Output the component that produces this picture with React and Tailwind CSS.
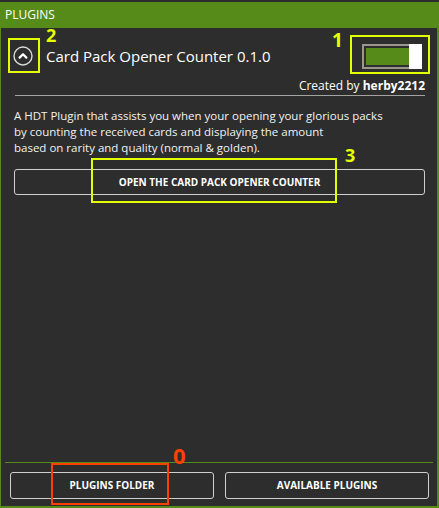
export default function App() {
  const font = { fontFamily: '"Open Sans", "Noto Sans", sans-serif' };
  return (
    <div className="relative w-[439px] h-[508px] overflow-hidden bg-[#2d2d2d] text-white flex flex-col" style={font}>
      <div className="h-[2px] shrink-0" />
      <div className="h-[26px] shrink-0 bg-[#578b19] flex items-center pl-[5px] text-[12px]">PLUGINS</div>

      <div className="flex-1 flex flex-col border-l border-r-2 border-b-2 border-[#578b19]">
        {/* title row */}
        <div className="mt-[10px] h-[36px] flex items-center">
          <div className="ml-[12px] w-[20px] h-[20px]">
            <svg viewBox="0 0 20 20" width="20" height="20">
              <circle cx="10" cy="10" r="9" fill="none" stroke="#d8d8d8" strokeWidth="1.4" />
              <path d="M6.6 11.6 L10 8.2 L13.4 11.6" fill="none" stroke="#ffffff" strokeWidth="2.2" strokeLinecap="round" strokeLinejoin="round" />
            </svg>
          </div>
          <div className="ml-[13px] text-[15px] leading-[16px]">Card Pack Opener Counter 0.1.0</div>
          <div className="ml-auto mr-[15px] flex h-[25px] w-[60px]">
            <div className="flex-1 border-2 border-r-0 border-[#9d968d] pl-[2px] py-[2px]">
              <div className="w-full h-full bg-[#578b19]" />
            </div>
            <div className="w-[13px] bg-white" />
          </div>
        </div>

        <div className="mt-[4px] ml-[14px] mr-[12px] border-b border-[#a3a3a3] text-right text-[12px] leading-[16px] pb-px">
          Created by <span className="font-bold">herby2212</span>
        </div>

        <div className="mt-[12px] px-[13px] text-[11.5px] leading-[16px] text-[#f2f2f2]">
          A HDT Plugin that assists you when your opening your glorious packs
          <br />
          by counting the received cards and displaying the amount
          <br />
          based on rarity and quality (normal &amp; golden).
        </div>

        <button className="mt-[13px] ml-[13px] mr-[12px] h-[26px] border border-[#cfcfcf] rounded-[3px] text-[10px] font-bold flex items-center justify-center">
          OPEN THE CARD PACK OPENER COUNTER
        </button>

        <div className="flex-1" />

        <div className="mx-[4px] h-px bg-[#578b19]" />
        <div className="mt-[9px] mb-[7px] ml-[9px] mr-[8px] flex gap-[11px]">
          <button className="flex-1 h-[27px] border border-[#cfcfcf] rounded-[3px] text-[10px] font-bold flex items-center justify-center">
            PLUGINS FOLDER
          </button>
          <button className="flex-1 h-[27px] border border-[#cfcfcf] rounded-[3px] text-[10px] font-bold flex items-center justify-center">
            AVAILABLE PLUGINS
          </button>
        </div>
      </div>

      {/* annotations */}
      <div className="absolute left-[8px] top-[38px] w-[32px] h-[35px] border-2 border-[#e4ff00]" />
      <div className="absolute left-[46px] top-[27px] text-[18px] font-bold leading-[16px] text-[#e4ff00]">2</div>
      <div className="absolute left-[350px] top-[35px] w-[80px] h-[39px] border-2 border-[#e4ff00]" />
      <div className="absolute left-[332px] top-[32px] text-[19px] font-bold leading-[16px] text-[#e4ff00]">1</div>
      <div className="absolute left-[91px] top-[158px] w-[246px] h-[45px] border-2 border-[#e4ff00]" />
      <div className="absolute left-[345px] top-[147px] text-[18px] font-bold leading-[16px] text-[#e4ff00]">3</div>
      <div className="absolute left-[51px] top-[463px] w-[118px] h-[42px] border-2 border-[#ff4000]" />
      <div className="absolute left-[173px] top-[446px] text-[22px] font-bold leading-[18px] text-[#ff4000]">0</div>
    </div>
  );
}
